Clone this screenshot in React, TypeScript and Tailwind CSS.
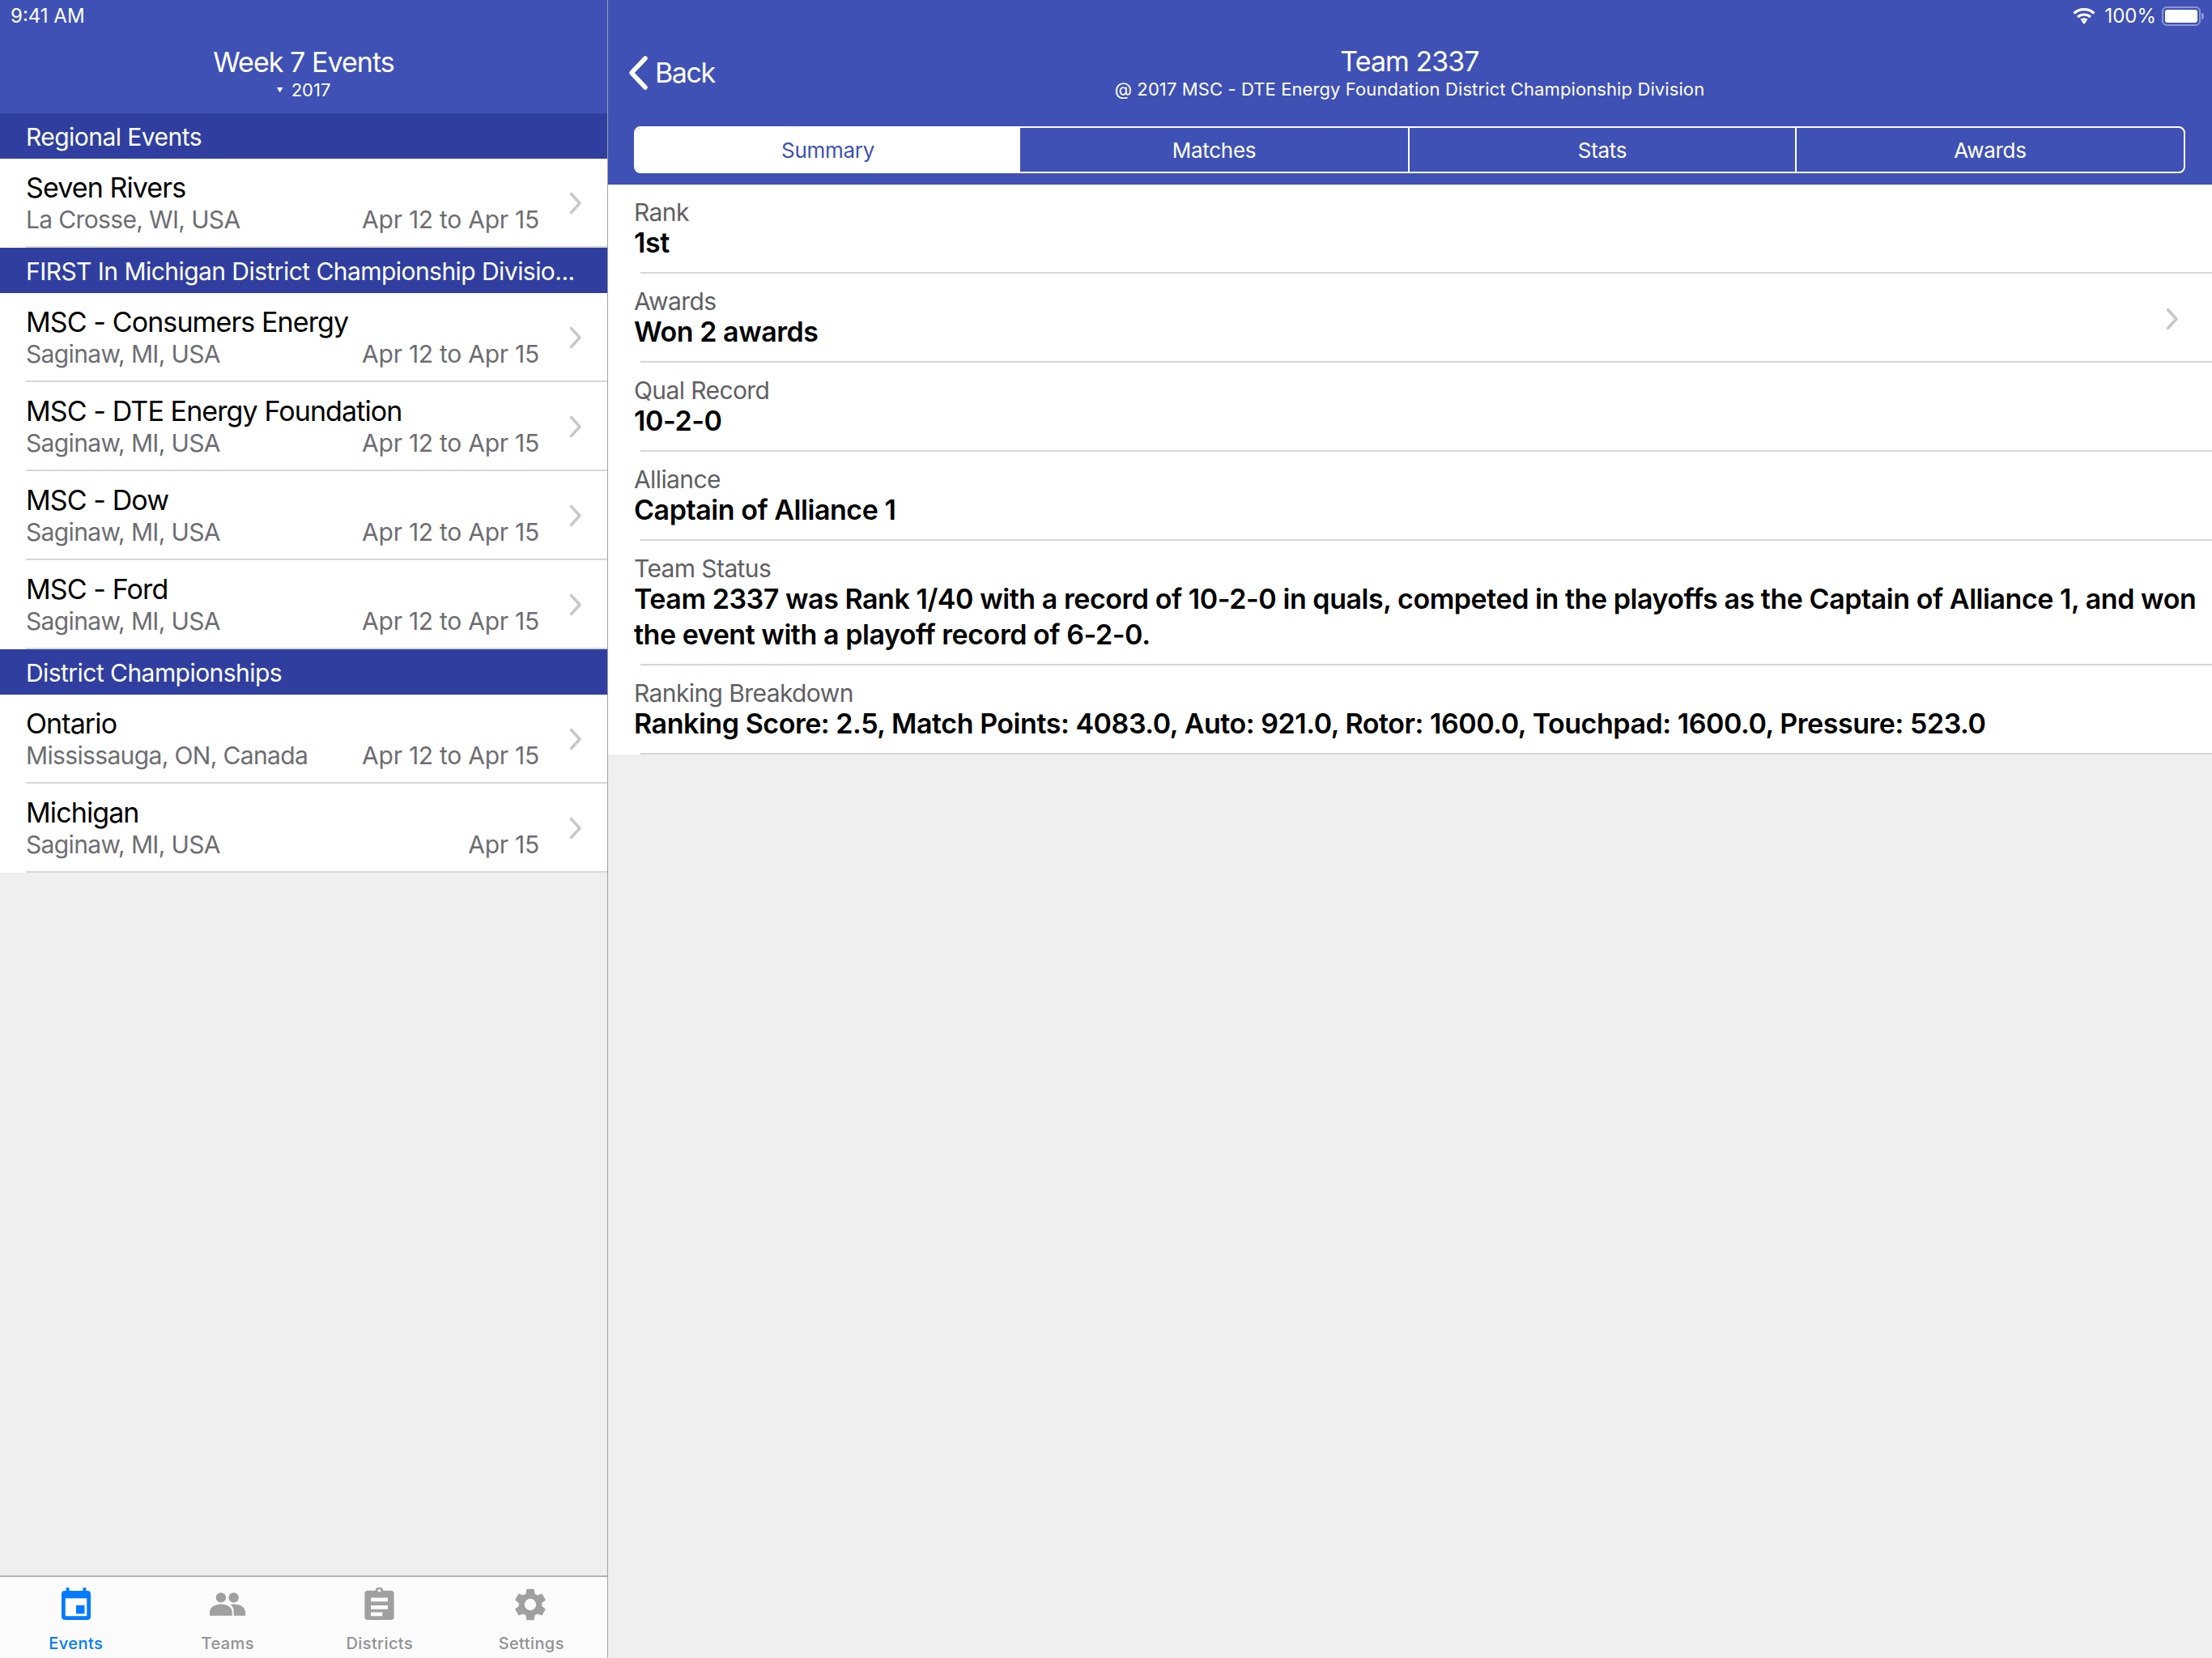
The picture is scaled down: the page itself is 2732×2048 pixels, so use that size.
const sections = [
  {
    title: 'Regional Events',
    rows: [{ name: 'Seven Rivers', place: 'La Crosse, WI, USA', date: 'Apr 12 to Apr 15' }],
  },
  {
    title: 'FIRST In Michigan District Championship Divisio...',
    rows: [
      { name: 'MSC - Consumers Energy', place: 'Saginaw, MI, USA', date: 'Apr 12 to Apr 15' },
      { name: 'MSC - DTE Energy Foundation', place: 'Saginaw, MI, USA', date: 'Apr 12 to Apr 15' },
      { name: 'MSC - Dow', place: 'Saginaw, MI, USA', date: 'Apr 12 to Apr 15' },
      { name: 'MSC - Ford', place: 'Saginaw, MI, USA', date: 'Apr 12 to Apr 15' },
    ],
  },
  {
    title: 'District Championships',
    rows: [
      { name: 'Ontario', place: 'Mississauga, ON, Canada', date: 'Apr 12 to Apr 15' },
      { name: 'Michigan', place: 'Saginaw, MI, USA', date: 'Apr 15' },
    ],
  },
]

const details = [
  { label: 'Rank', value: '1st' },
  { label: 'Awards', value: 'Won 2 awards', chevron: true },
  { label: 'Qual Record', value: '10-2-0' },
  { label: 'Alliance', value: 'Captain of Alliance 1' },
  {
    label: 'Team Status',
    value:
      'Team 2337 was Rank 1/40 with a record of 10-2-0 in quals, competed in the playoffs as the Captain of Alliance 1, and won the event with a playoff record of 6-2-0.',
  },
  {
    label: 'Ranking Breakdown',
    value: 'Ranking Score: 2.5, Match Points: 4083.0, Auto: 921.0, Rotor: 1600.0, Touchpad: 1600.0, Pressure: 523.0',
  },
]

function Chevron() {
  return (
    <svg width="16" height="28" viewBox="0 0 16 28" fill="none" className="shrink-0">
      <path d="M2.500 2.500l10.500 11.500L2.500 25.500" stroke="#c7c7cc" strokeWidth="3.500" strokeLinecap="round" strokeLinejoin="round" />
    </svg>
  )
}

function EventRow({ name, place, date }: { name: string; place: string; date: string }) {
  return (
    <div className="relative h-[110px] bg-white pl-[32px] pr-[31px] flex items-center">
      <div className="flex-1 min-w-0 pr-[37px] pb-[3px]">
        <div className="text-[34px] leading-[44px] text-black tracking-[-0.9px]">{name}</div>
        <div className="-mt-[1px] flex justify-between text-[30px] leading-[36px] text-[#6d6d72]">
          <span className="tracking-[-0.65px]">{place}</span>
          <span className="tracking-[-0.25px]">{date}</span>
        </div>
      </div>
      <Chevron />
      <div className="absolute left-[32px] right-0 bottom-0 h-[2px] bg-[#d6d6d6]" />
    </div>
  )
}

function Tab({ icon, label, active }: { icon: React.ReactNode; label: string; active?: boolean }) {
  return (
    <div className="flex-1 flex flex-col items-center pt-[12px]">
      <div className="h-[42px] flex items-center justify-center">{icon}</div>
      <div
        className={`mt-[16px] text-[20px] leading-[24px] font-medium tracking-[0.4px] ${active ? 'text-[#007aff]' : 'text-[#929292]'}`}
      >
        {label}
      </div>
    </div>
  )
}

export default function App() {
  return (
    <div className="w-[2732px] h-[2048px] flex overflow-hidden bg-[#efefef] font-['Inter',sans-serif]">
      <div className="w-[751px] h-full flex flex-col border-r border-[#a0a0a0]">
        <div className="h-[140px] bg-[#3f51b5] text-white flex flex-col items-center">
          <div className="self-start pl-[13px] pt-[6px] text-[24px] leading-[28px]">9:41 AM</div>
          <div className="mt-[22px] text-[34px] leading-[42px] tracking-[-0.95px]">Week 7 Events</div>
          <div className="flex items-center gap-[10px] text-[22px] leading-[26px]">
            <span className="text-[8px]">▼</span>
            <span>2017</span>
          </div>
        </div>
        {sections.map((section) => (
          <div key={section.title}>
            <div className="h-[56px] bg-[#303f9f] text-white text-[30px] leading-[58px] pl-[32px] tracking-[-0.55px] whitespace-nowrap overflow-hidden">
              {section.title}
            </div>
            {section.rows.map((row) => (
              <EventRow key={row.name} {...row} />
            ))}
          </div>
        ))}
        <div className="flex-1" />
        <div className="h-[102px] bg-[#fbfbfb] border-t-2 border-[#b2b2b2] flex">
          <Tab
            active
            label="Events"
            icon={
              <svg width="36" height="40" viewBox="0 0 38 42" fill="#007aff">
                <path fillRule="evenodd" d="M6 0h4v4h18V0h4v4h2a4 4 0 014 4v30a4 4 0 01-4 4H4a4 4 0 01-4-4V8a4 4 0 014-4h2V0zM5 14v23h28V14H5z" />
                <rect x="19" y="23" width="11" height="11" />
              </svg>
            }
          />
          <Tab
            label="Teams"
            icon={
              <svg width="44" height="29" viewBox="0 0 46 30" fill="#a0a0a0" className="mt-[1px]">
                <ellipse cx="14.500" cy="6.500" rx="6.500" ry="6.500" />
                <ellipse cx="31" cy="6.500" rx="6.500" ry="6.500" />
                <path d="M0 30v-5c0-6 7-10 14.500-10S29 19 29 25v5H0z" />
                <path d="M31 30v-6c0-4-2-7-4-8.500 1.500-.5 3-.5 5-.5 7 0 14 4 14 10v5H31z" />
              </svg>
            }
          />
          <Tab
            label="Districts"
            icon={
              <svg width="37" height="40" viewBox="0 0 38 42" fill="#a0a0a0">
                <path
                  fillRule="evenodd"
                  d="M4 4h10a5 5 0 0110 0h10a4 4 0 014 4v30a4 4 0 01-4 4H4a4 4 0 01-4-4V8a4 4 0 014-4zm15-2a2 2 0 100 4 2 2 0 000-4zM8 13v5h22v-5H8zm0 10v5h22v-5H8zm0 9v5h15v-5H8z"
                />
              </svg>
            }
          />
          <Tab
            label="Settings"
            icon={
              <svg width="48" height="48" viewBox="0 0 24 24" fill="#a0a0a0" className="shrink-0 mt-[2px] mr-[2px]">
                <path d="M19.140 12.940c.04-.3.06-.61.06-.94s-.02-.64-.07-.94l2.030-1.580a.5.5 0 00.12-.61l-1.920-3.320a.5.5 0 00-.59-.22l-2.390.96a7 7 0 00-1.620-.94l-.36-2.540a.48.48 0 00-.48-.41h-3.840a.48.48 0 00-.47.41l-.36 2.540c-.59.24-1.130.57-1.620.94l-2.390-.96a.48.48 0 00-.59.22L2.740 8.870a.47.47 0 00.12.61l2.030 1.580c-.05.3-.09.63-.09.94s.02.64.07.94l-2.030 1.580a.5.5 0 00-.12.61l1.920 3.320c.12.22.37.29.59.22l2.390-.96c.5.38 1.030.7 1.620.94l.36 2.540c.05.24.24.41.48.41h3.840c.24 0 .44-.17.47-.41l.36-2.540c.59-.24 1.130-.56 1.620-.94l2.390.96c.22.08.47 0 .59-.22l1.920-3.320a.47.47 0 00-.12-.61l-2.010-1.580zM12 15.600a3.600 3.600 0 110-7.200 3.600 3.600 0 010 7.200z" />
              </svg>
            }
          />
        </div>
      </div>

      <div className="flex-1 flex flex-col min-w-0">
        <div className="relative h-[228px] bg-[#3f51b5] text-white pl-[32px] pr-[33px] flex flex-col">
          <div className="absolute right-[10px] top-[6px] flex items-center gap-[7px] text-[24px] leading-[28px]">
            <svg width="28" height="22" viewBox="0 0 28 22" fill="none" stroke="#fff" strokeWidth="3.200" className="mr-[4px]">
              <path d="M1.500 7.500C8.500 1 19.500 1 26.500 7.500" />
              <path d="M6 12c4.500-4 11.500-4 16 0" />
              <path d="M10.500 16c2-1.700 5-1.700 7 0" />
              <path d="M14 21l-3-3.600c1.800-1.200 4.200-1.200 6 0L14 21z" fill="#fff" stroke="none" />
            </svg>
            <span>100%</span>
            <div className="flex items-center">
              <div className="w-[48px] h-[24px] rounded-[6px] border-2 border-white/40 p-[2px]">
                <div className="w-full h-full rounded-[3px] bg-white" />
              </div>
              <div className="ml-[1px] w-[3px] h-[8px] bg-white/40 rounded-r-full" />
            </div>
          </div>
          <div className="absolute left-[23px] top-[68px] flex items-center gap-[7px]">
            <svg width="28" height="44" viewBox="0 0 28 44" fill="none">
              <path d="M23 4L6 22l17 18" stroke="#fff" strokeWidth="5.500" strokeLinecap="round" strokeLinejoin="round" />
            </svg>
            <span className="text-[34px] leading-[44px] tracking-[-1.4px]">Back</span>
          </div>
          <div className="pt-[55px] flex flex-col items-center">
            <div className="text-[34px] leading-[42px] tracking-[-0.95px]">Team 2337</div>
            <div className="text-[22px] leading-[26px] tracking-[0.1px]">
              @ 2017 MSC - DTE Energy Foundation District Championship Division
            </div>
          </div>
          <div className="mt-[33px] h-[58px] flex rounded-[8px] border-2 border-white overflow-hidden text-[26px] tracking-[-0.3px]">
            <div className="w-[475px] bg-white text-[#3f51b5] flex items-center justify-center">Summary</div>
            <div className="w-[481px] border-r-2 border-white flex items-center justify-center">Matches</div>
            <div className="w-[478px] border-r-2 border-white flex items-center justify-center">Stats</div>
            <div className="flex-1 flex items-center justify-center">Awards</div>
          </div>
        </div>
        {details.map((item) => (
          <div key={item.label} className="relative bg-white pl-[32px] pr-[16px] pt-[18px] pb-[16px] flex items-center">
            <div className="flex-1 min-w-0">
              <div className="text-[30px] leading-[32px] text-[#5f5f63] tracking-[-0.6px]">{item.label}</div>
              <div className="text-[34px] leading-[44px] font-semibold text-black tracking-[-0.45px]">{item.value}</div>
            </div>
            {item.chevron && (
              <div className="pr-[25px]">
                <Chevron />
              </div>
            )}
            <div className="absolute left-[40px] right-0 bottom-0 h-[2px] bg-[#d6d6d6]" />
          </div>
        ))}
      </div>
    </div>
  )
}
